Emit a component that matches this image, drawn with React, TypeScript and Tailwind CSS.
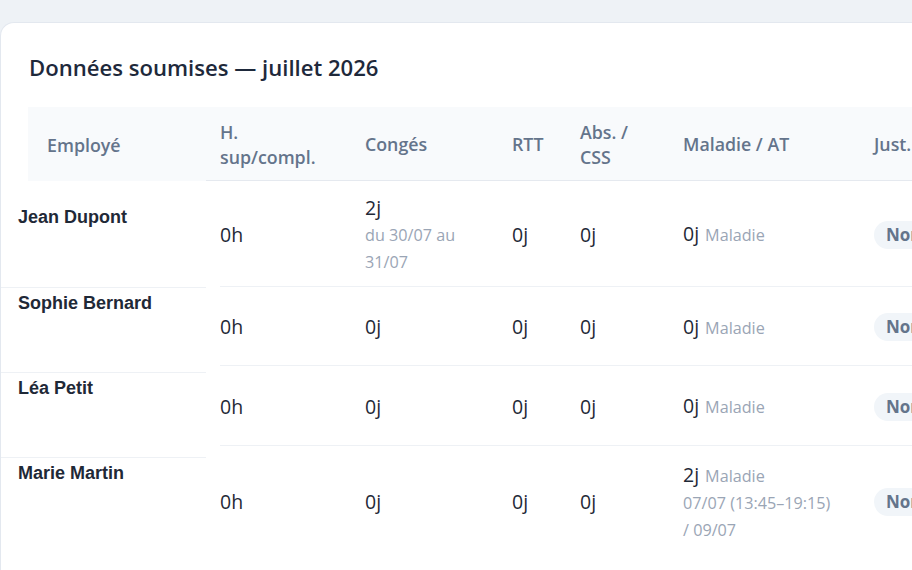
import type { ReactNode } from "react"

type Row = {
  name: string
  hsup: string
  conges: { value: string; detail?: string }
  rtt: string
  abs: string
  maladie: { value: string; detail?: string }
  just: string
  rightHeight: string
  leftHeight: string
}

const rows: Row[] = [
  {
    name: "Jean Dupont",
    hsup: "0h",
    conges: { value: "2j", detail: "du 30/07 au 31/07" },
    rtt: "0j",
    abs: "0j",
    maladie: { value: "0j" },
    just: "Non",
    rightHeight: "h-[106px]",
    leftHeight: "h-[86px] pt-[5px]",
  },
  {
    name: "Sophie Bernard",
    hsup: "0h",
    conges: { value: "0j" },
    rtt: "0j",
    abs: "0j",
    maladie: { value: "0j" },
    just: "Non",
    rightHeight: "h-[79px]",
    leftHeight: "h-[85px] pt-[4px] border-t",
  },
  {
    name: "Léa Petit",
    hsup: "0h",
    conges: { value: "0j" },
    rtt: "0j",
    abs: "0j",
    maladie: { value: "0j" },
    just: "Non",
    rightHeight: "h-[80px]",
    leftHeight: "h-[85px] pt-[4px] border-t",
  },
  {
    name: "Marie Martin",
    hsup: "0h",
    conges: { value: "0j" },
    rtt: "0j",
    abs: "0j",
    maladie: { value: "2j", detail: "07/07 (13:45–19:15) / 09/07" },
    just: "Non",
    rightHeight: "h-[110px]",
    leftHeight: "h-[85px] pt-[4px] border-t",
  },
]

const value = "text-[19.5px] font-normal leading-[28px] text-[#1f2937]"
const sub = "text-[16.2px] leading-[27px] text-[#9aa5b5]"

function HeadCell({ className, children }: { className: string; children: ReactNode }) {
  return <div className={`flex items-center pl-[14px] ${className}`}>{children}</div>
}

export default function App() {
  return (
    <div className="min-h-screen overflow-hidden bg-[#eef2f6] pt-[22px] font-['Open_Sans',sans-serif]">
      <div className="w-[1200px] rounded-tl-[14px] border-l border-t border-[#e3e8ef] bg-white pb-10">
        <h2 className="pl-[28px] pt-[29px] text-[22.1px] font-semibold leading-[30px] text-[#1e293b]">
          Données soumises — juillet 2026
        </h2>

        {/* en-tête */}
        <div className="ml-[27px] mt-[25px] flex h-[74px] bg-[#f8fafc] text-[17.8px] font-semibold leading-[25px] text-[#64748b]">
          <div className="flex w-[178px] items-center pl-[19px] pt-[2px]">Employé</div>
          <div className="flex flex-1 border-b border-[#e5e9ef] pt-[2px]">
            <HeadCell className="w-[145px]">
              <span>
                H.
                <br />
                sup/compl.
              </span>
            </HeadCell>
            <HeadCell className="w-[147px]">Congés</HeadCell>
            <HeadCell className="w-[68px]">RTT</HeadCell>
            <HeadCell className="w-[103px]">
              <span>
                Abs. /
                <br />
                CSS
              </span>
            </HeadCell>
            <HeadCell className="w-[191px]">Maladie / AT</HeadCell>
            <HeadCell className="w-[120px]">Just.</HeadCell>
          </div>
        </div>

        <div className="flex">
          {/* colonne employés */}
          <div className="w-[205px] pt-[20px]">
            {rows.map((r) => (
              <div
                key={r.name}
                className={`border-[#eef1f5] pl-[17px] font-['Liberation_Sans',sans-serif] text-[18px] font-bold leading-[22px] text-[#1f2937] ${r.leftHeight}`}
              >
                {r.name}
              </div>
            ))}
          </div>

          {/* données */}
          <div className="ml-[14px] flex-1">
            {rows.map((r, i) => (
              <div
                key={r.name}
                className={`flex items-center pt-[2px] ${r.rightHeight} ${i < rows.length - 1 ? "border-b border-[#eef1f5]" : ""}`}
              >
                <div className={`w-[145px] ${value}`}>{r.hsup}</div>
                <div className="w-[147px]">
                  <div className={value}>{r.conges.value}</div>
                  {r.conges.detail && <div className={`w-[110px] ${sub}`}>{r.conges.detail}</div>}
                </div>
                <div className={`w-[68px] ${value}`}>{r.rtt}</div>
                <div className={`w-[103px] ${value}`}>{r.abs}</div>
                <div className="w-[191px]">
                  <div>
                    <span className={value}>{r.maladie.value}</span>
                    <span className={`ml-[6px] ${sub}`}>Maladie</span>
                  </div>
                  {r.maladie.detail && <div className={`w-[152px] ${sub}`}>{r.maladie.detail}</div>}
                </div>
                <div>
                  <span className="inline-flex h-[28px] items-center rounded-full bg-[#f1f5f9] px-[12px] text-[17px] font-bold text-[#64748b]">
                    {r.just}
                  </span>
                </div>
              </div>
            ))}
          </div>
        </div>
      </div>
    </div>
  )
}
